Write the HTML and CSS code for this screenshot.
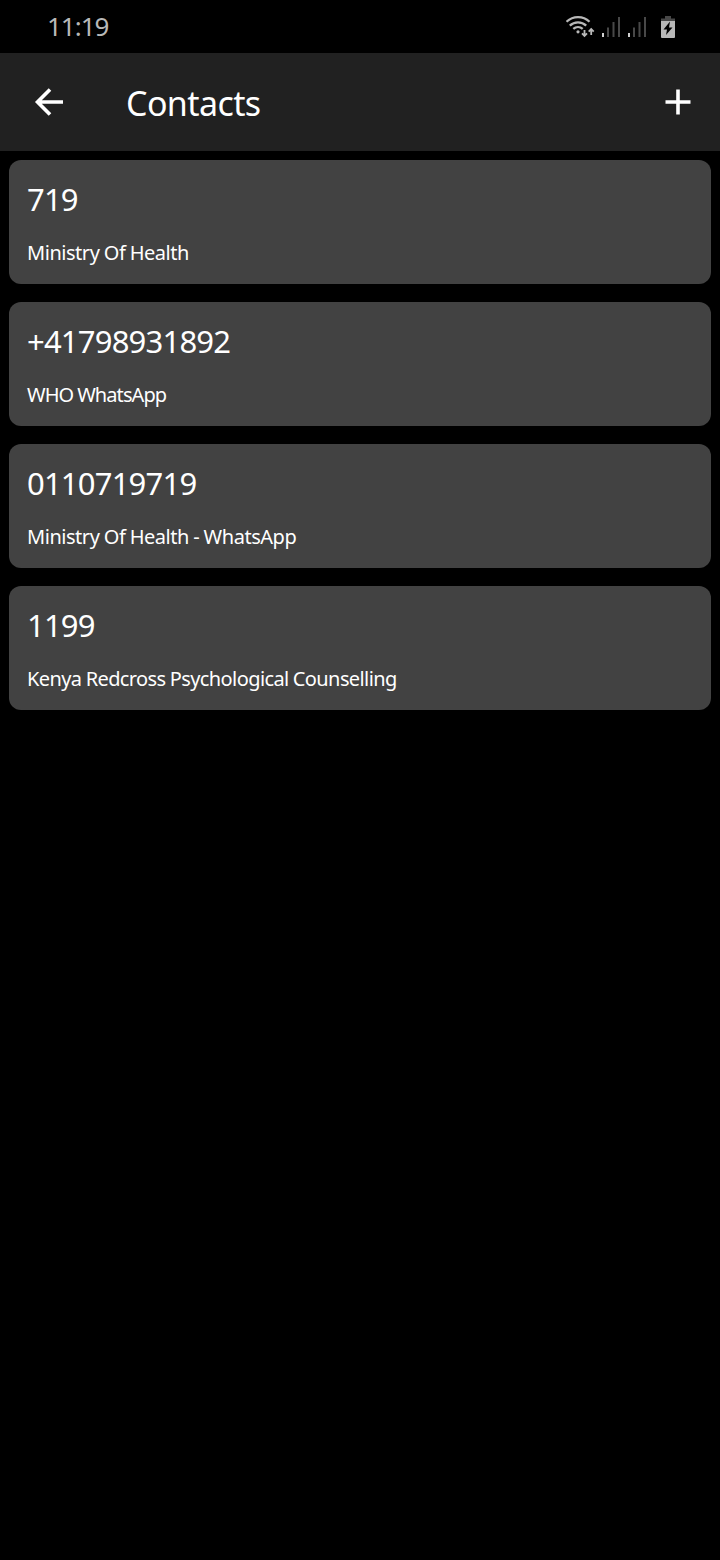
FILE: index.html
```html
<!DOCTYPE html>
<html lang="en">
<head>
<meta charset="utf-8">
<title>Contacts</title>
<link rel="stylesheet" href="styles.css">
</head>
<body>
<div class="status">
  <span class="clock">11:19</span>
  <svg class="indicators" width="112" height="28" viewBox="566 13 112 28">
    <g fill="none" stroke="#b8b8b8" stroke-width="2.3">
      <path d="M566.500 21.800A16.500 16.500 0 0 1 589.500 21.800"/>
      <path d="M569.800 25.600A12 12 0 0 1 586.200 25.600"/>
      <path d="M573.300 28.900A7.200 7.200 0 0 1 582.700 28.900"/>
    </g>
    <circle cx="578" cy="31.800" r="1.600" fill="#b8b8b8"/>
    <path d="M584.500 30V36M582 33.300L584.500 36L587 33.300M591.200 35V29M588.700 31.700L591.200 29L593.700 31.700" fill="none" stroke="#b8b8b8" stroke-width="1.800"/>
    <path d="M602 33h2v4h-2zM628 33h2v4h-2z" fill="#d0d0d0"/>
    <path d="M607 27.500h2v9.500h-2zM612.500 22h2v15h-2zM618 17h2v20h-2zM633 27.500h2v9.500h-2zM638.500 22h2v15h-2zM644 17h2v20h-2z" fill="#484848"/>
    <path d="M665 16h6v2.500h4v3h-14v-3h4z" fill="#484848"/>
    <path d="M661 21h14v16q0 1-1 1h-12q-1 0-1-1z" fill="#b8b8b8"/>
    <path d="M670 21.500L663.500 29.500H667L666 35L672.500 27.500H669Z" fill="#000"/>
  </svg>
</div>
<header class="bar">
  <svg width="30" height="30" viewBox="34 87 30 30"><path d="M63 102H38M50 89.500L37.500 102L50 114.500" fill="none" stroke="#fff" stroke-width="3.600"/></svg>
  <h1>Contacts</h1>
  <svg width="26" height="26" viewBox="0 0 26 26"><path d="M13 .5V25.500M.5 13H25.500" stroke="#fff" stroke-width="3.600"/></svg>
</header>
<main>
  <article class="card"><div class="number">719</div><div class="name">Ministry Of Health</div></article>
  <article class="card"><div class="number">+41798931892</div><div class="name tight">WHO WhatsApp</div></article>
  <article class="card"><div class="number">0110719719</div><div class="name">Ministry Of Health - WhatsApp</div></article>
  <article class="card"><div class="number">1199</div><div class="name long">Kenya Redcross Psychological Counselling</div></article>
</main>
</body>
</html>
```
FILE: styles.css
```css
* { box-sizing: border-box; }
body { margin: 0; background: #000; color: #fff; font-family: "Noto Sans", sans-serif; min-height: 1560px; }
.status { height: 53px; padding: 0 42px 0 47px; display: flex; align-items: center; justify-content: space-between; color: #b8b8b8; }
.clock { font-size: 26px; line-height: 36px; letter-spacing: -1px; padding-bottom: 2px; }
.bar { height: 98px; background: #212121; display: flex; align-items: center; padding: 0 29px 0 34px; }
.bar h1 { margin: 0 auto 0 62px; padding-top: 1px; font-size: 34px; font-weight: 400; line-height: 46px; letter-spacing: -.6px; }
main { padding: 9px; display: grid; gap: 18px; }
.card { height: 124px; border-radius: 12px; background: #424242; padding: 17px 18px; white-space: nowrap; }
.number { font-size: 31px; line-height: 44px; letter-spacing: -.8px; }
.name { font-size: 20px; line-height: 28px; margin-top: 18px; letter-spacing: -.46px; word-spacing: -.4px; }
.tight { letter-spacing: -.92px; }
.long { letter-spacing: -.6px; }
```
